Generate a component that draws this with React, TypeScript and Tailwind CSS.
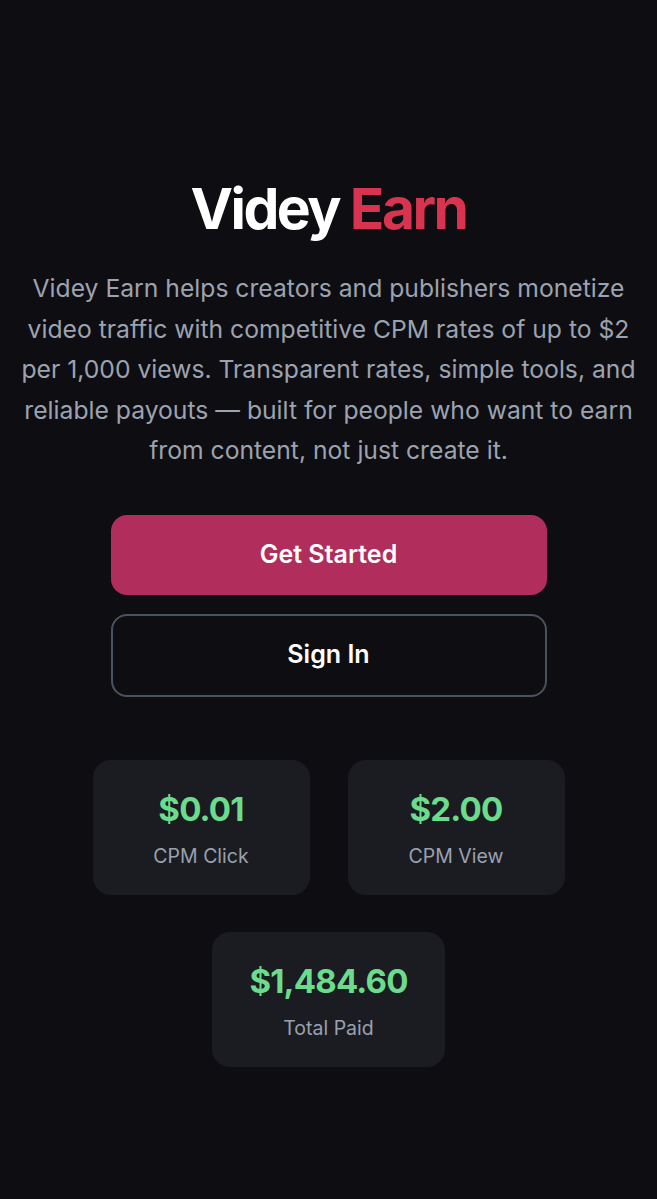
import React from "react";

function Stat({ value, label, w }: { value: string; label: string; w: string }) {
  return (
    <div className={`${w} h-[135px] rounded-[18px] bg-[#1b1c22] flex flex-col items-center justify-center pt-[6px]`}>
      <div className="text-[33px] font-bold leading-none text-[#6bdc8b] tracking-tight">{value}</div>
      <div className="mt-[21px] text-[19.5px] leading-none text-[#9aa1ae]">{label}</div>
    </div>
  );
}

export default function App() {
  return (
    <div
      className="min-h-[1199px] w-full bg-[#0e0e12] flex flex-col items-center"
      style={{ fontFamily: "Inter, 'Noto Sans', sans-serif" }}
    >
      <h1 className="mt-[175px] text-[57px] font-bold leading-[68px] tracking-[-0.045em] text-white">
        Videy <span className="text-[#d9344f]">Earn</span>
      </h1>
      <p className="mt-[25px] px-[14px] text-center text-[24.7px] leading-[40.5px] text-[#9ca3b0]">
        Videy Earn helps creators and publishers monetize video traffic with competitive CPM rates of up to $2 per
        1,000 views. Transparent rates, simple tools, and reliable payouts — built for people who want to earn from
        content, not just create it.
      </p>
      <button className="mt-[44px] w-[436px] h-[80px] rounded-[16px] bg-[#b02d5c] text-white text-[25px] font-semibold">
        Get Started
      </button>
      <button className="mt-[19px] w-[436px] h-[83px] rounded-[16px] border-2 border-[#4a5260] bg-transparent text-white text-[25px] font-semibold">
        Sign In
      </button>
      <div className="mt-[63px] flex gap-[38px]">
        <Stat value="$0.01" label="CPM Click" w="w-[217px]" />
        <Stat value="$2.00" label="CPM View" w="w-[217px]" />
      </div>
      <div className="mt-[37px]">
        <Stat value="$1,484.60" label="Total Paid" w="w-[233px]" />
      </div>
    </div>
  );
}
